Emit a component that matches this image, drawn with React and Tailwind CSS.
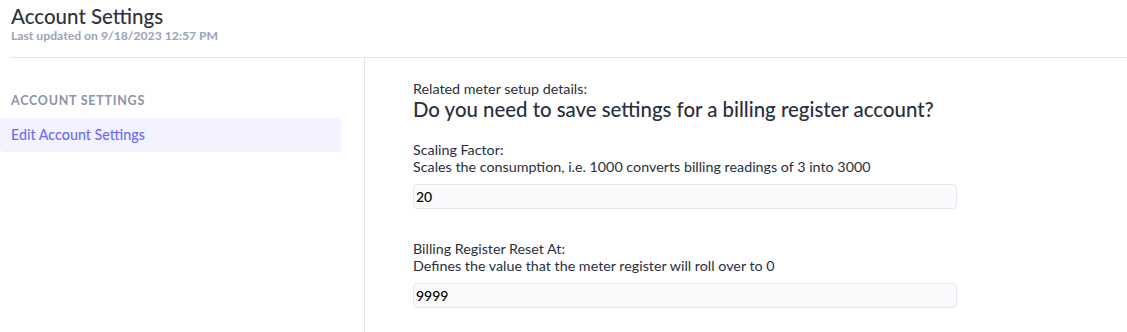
export default function App() {
  const font = { fontFamily: 'Lato, "Noto Sans", sans-serif' };
  return (
    <div className="w-[1127px] h-[332px] bg-white overflow-hidden" style={font}>
      <div className="pl-[11px] pt-[3px] h-[57px]">
        <h1 className="text-[20.5px] leading-[26px] text-[#2d3142] font-medium">Account Settings</h1>
        <p className="text-[12.2px] leading-[14px] font-bold text-[#9aa3b8]">Last updated on 9/18/2023 12:57 PM</p>
      </div>
      <div className="ml-[11px] border-t border-[#e4e4ee] flex">
        <aside className="w-[365px] shrink-0 -ml-[11px] pr-[24px] pt-[35px] h-[275px] border-r border-[#e4e4ee]">
          <div className="pl-[11px] text-[12.5px] font-bold tracking-[0.06em] text-[#8d93a6] leading-[16px]">ACCOUNT SETTINGS</div>
          <div className="mt-[9px] h-[34px] w-[341px] rounded-[4px] bg-[#f3f3ff] flex items-center pl-[11px] text-[14.3px] text-[#6b6bf5] font-medium">
            Edit Account Settings
          </div>
        </aside>
        <main className="pl-[48px] pt-[22px] text-[#2a2f3d]">
          <div className="text-[14.3px] leading-[17px]">Related meter setup details:</div>
          <div className="text-[20.4px] leading-[24px] font-medium">Do you need to save settings for a billing register account?</div>
          <div className="mt-[20px] text-[14.3px] leading-[17px]">
            <div>Scaling Factor:</div>
            <div>Scales the consumption, i.e. 1000 converts billing readings of 3 into 3000</div>
          </div>
          <div className="mt-[9px] w-[544px] h-[25px] rounded-[4px] border border-[#e6e6f0] bg-[#fafafd] flex items-center px-[2px] text-[14px] font-medium text-black">20</div>
          <div className="mt-[31px] text-[14.3px] leading-[17px]">
            <div>Billing Register Reset At:</div>
            <div>Defines the value that the meter register will roll over to 0</div>
          </div>
          <div className="mt-[9px] w-[544px] h-[25px] rounded-[4px] border border-[#e6e6f0] bg-[#fafafd] flex items-center px-[2px] text-[14px] font-medium text-black">9999</div>
        </main>
      </div>
    </div>
  );
}
